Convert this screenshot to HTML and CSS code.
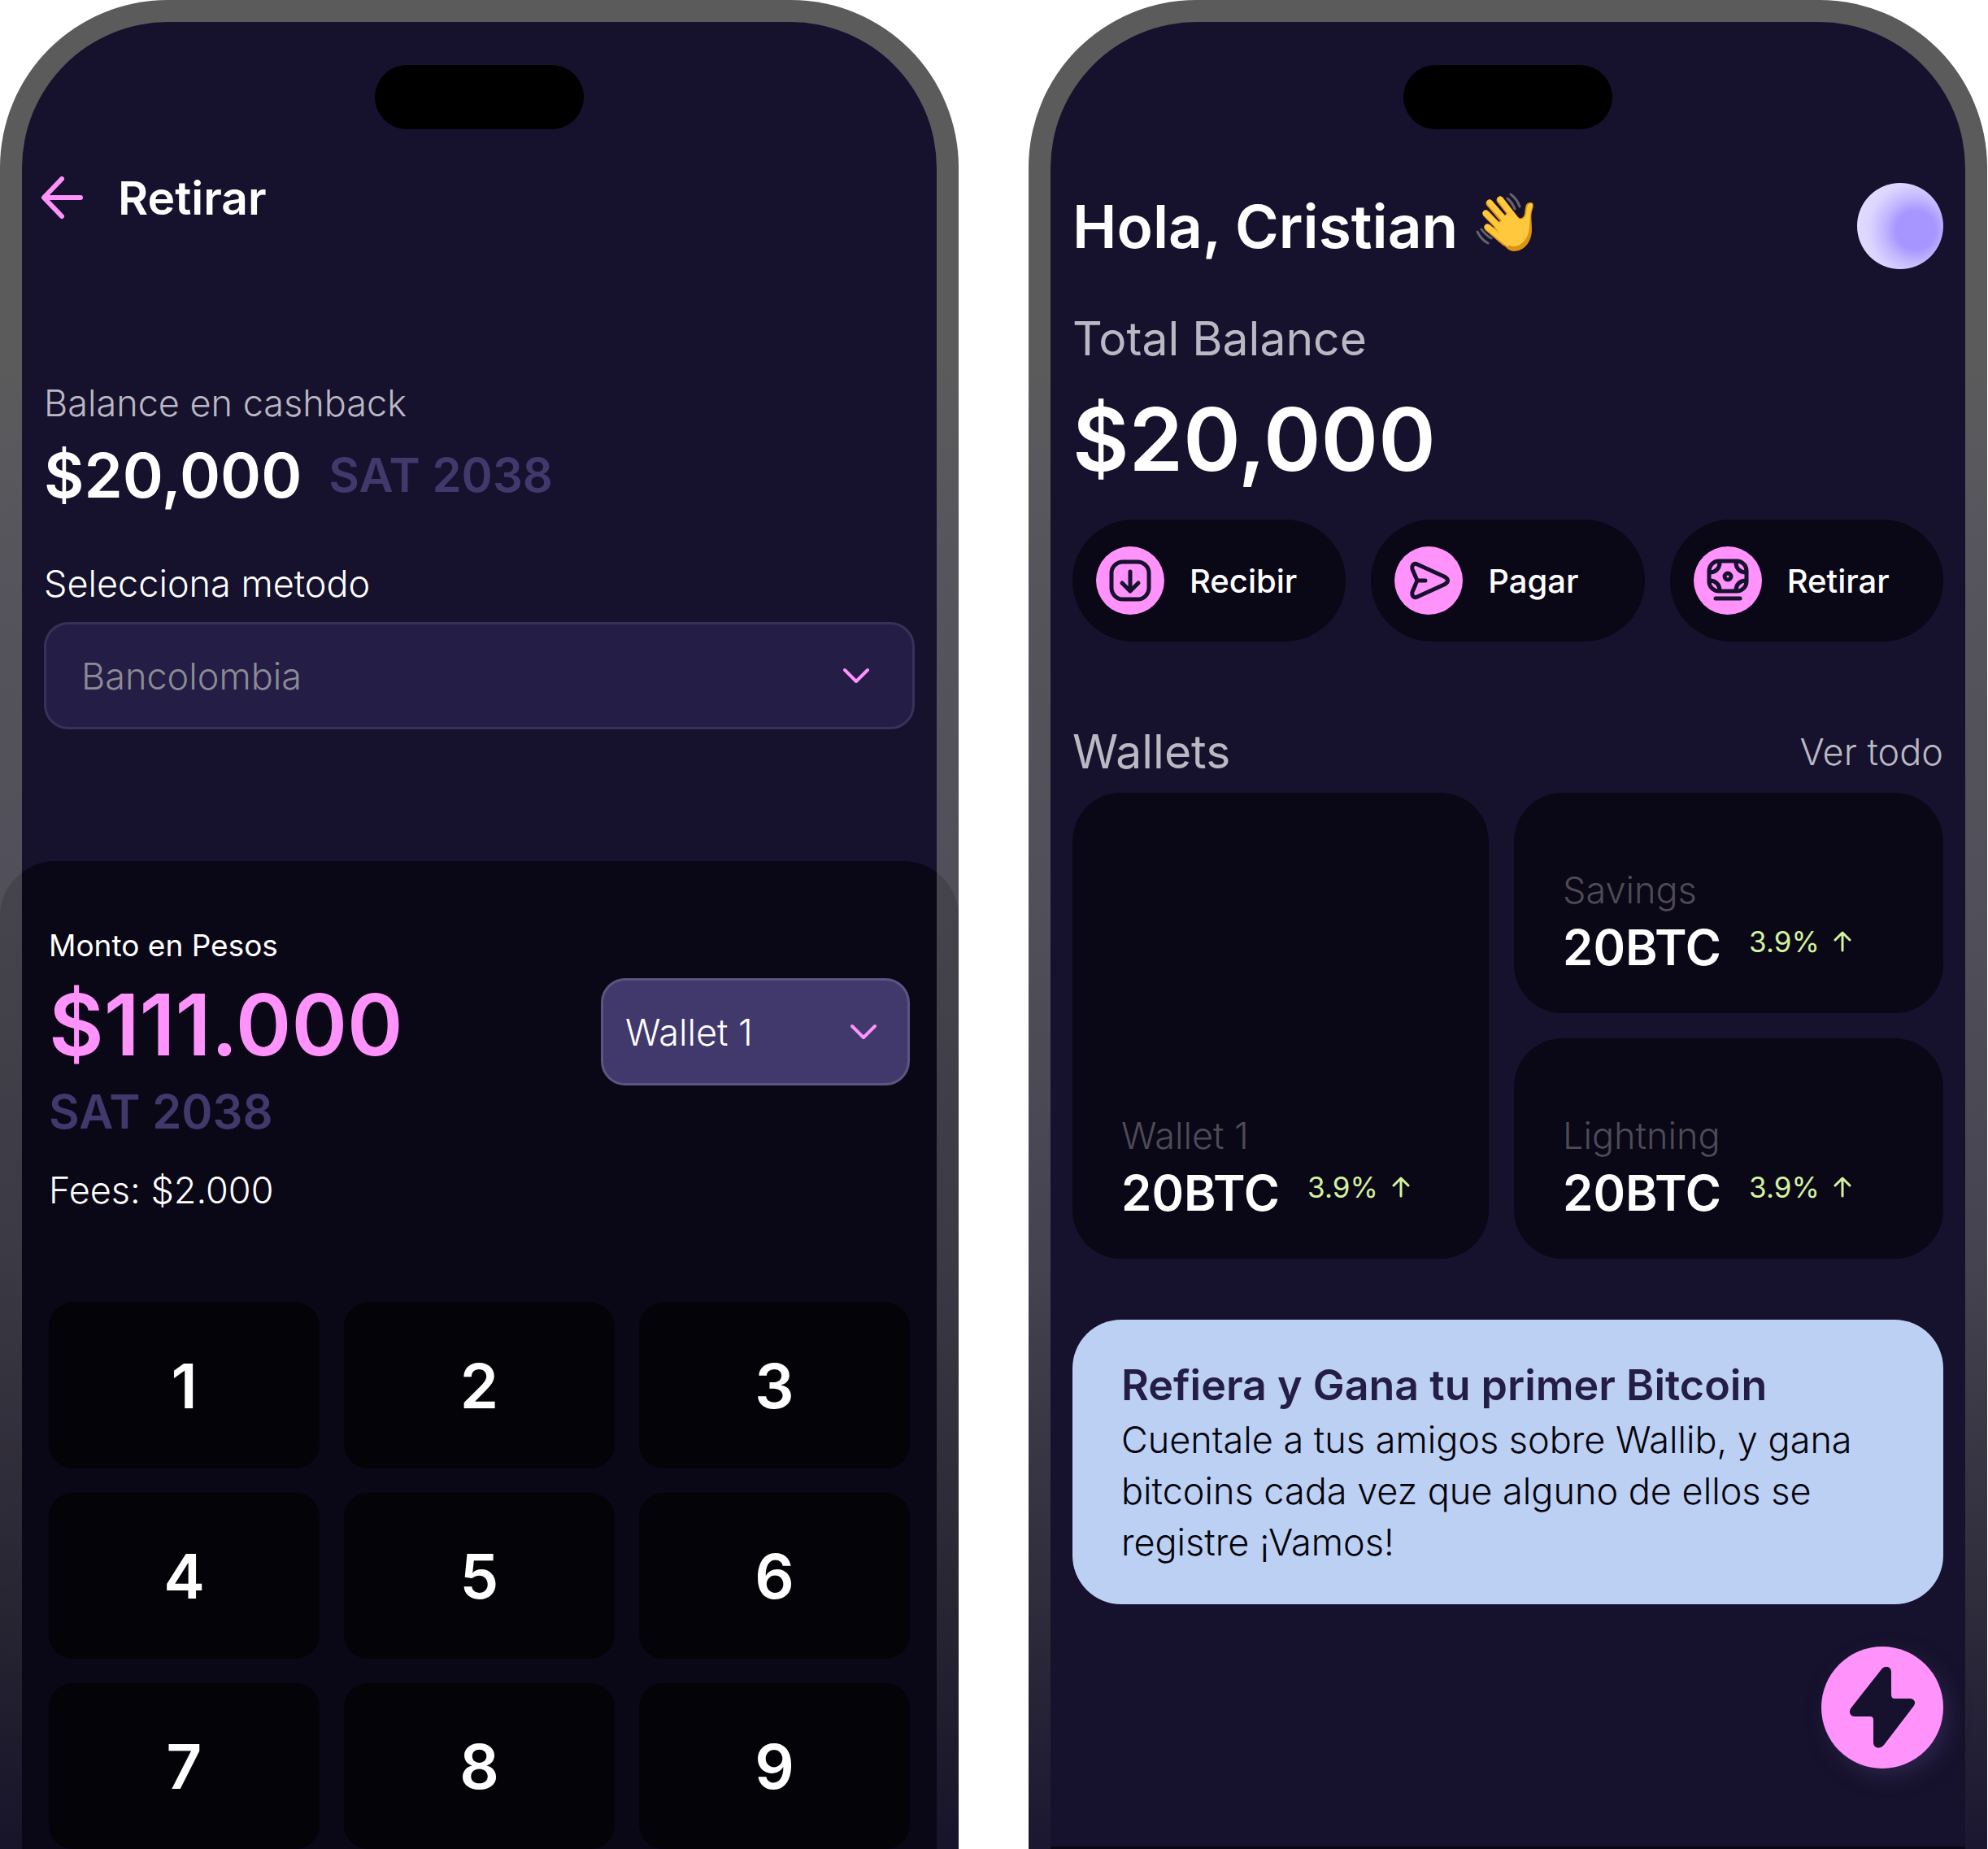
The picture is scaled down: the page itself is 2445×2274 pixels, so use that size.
FILE: index.html
```html
<!DOCTYPE html>
<html lang="es">
<head>
<meta charset="utf-8">
<title>Wallib</title>
<meta name="viewport" content="width=device-width, initial-scale=1">
<link rel="stylesheet" href="styles.css">
</head>
<body>
<main class="phones">
  <section class="phone">
    <div class="screen">
      <div class="island"></div>
      <header class="topbar">
        <button class="back" type="button" aria-label="Volver">
          <svg viewBox="0 0 54 54" width="54" height="54" fill="none" stroke="currentColor" stroke-width="6" stroke-linecap="round" stroke-linejoin="round"><path d="M50 27H6M27 4L5 27l22 23"/></svg>
        </button>
        <h1 class="title">Retirar</h1>
      </header>
      <div class="cashback">
        <p class="label muted">Balance en cashback</p>
        <p class="cashback-row"><strong class="amount">$20,000</strong><span class="sats">SAT 2038</span></p>
        <label class="label method-label" for="method">Selecciona metodo</label>
        <div class="select-wrap">
          <select id="method" class="select"><option>Bancolombia</option></select>
          <svg class="chevron" viewBox="0 0 32 20" width="32" height="20"><path d="M2 3l14 14L30 3"/></svg>
        </div>
      </div>
      <div class="sheet">
        <div class="sheet-top">
          <div>
            <p class="pesos-label">Monto en Pesos</p>
            <p class="pesos">$111.000</p>
            <p class="sats sats-line">SAT 2038</p>
            <p class="label fees">Fees: $2.000</p>
          </div>
          <div class="select-wrap wallet-wrap">
            <select class="select select-wallet" aria-label="Wallet"><option>Wallet 1</option></select>
            <svg class="chevron chevron-wallet" viewBox="0 0 32 20" width="32" height="20"><path d="M2 3l14 14L30 3"/></svg>
          </div>
        </div>
        <div class="keypad">
          <button class="key" type="button">1</button>
          <button class="key" type="button">2</button>
          <button class="key" type="button">3</button>
          <button class="key" type="button">4</button>
          <button class="key" type="button">5</button>
          <button class="key" type="button">6</button>
          <button class="key" type="button">7</button>
          <button class="key" type="button">8</button>
          <button class="key" type="button">9</button>
        </div>
      </div>
    </div>
  </section>

  <section class="phone">
    <div class="screen home">
      <div class="island"></div>
      <header class="greeting">
        <h1 class="hello">Hola, Cristian
          <svg class="wave" viewBox="0 0 76 76" width="76" height="76" aria-hidden="true">
            <g fill="none" stroke="#65626f" stroke-width="3" stroke-linecap="round"><path d="M43 3q8 6 11 15M39 8q6 5 9 13M2 49q5 10 13 14M7 46q5 7 12 11"/></g>
            <g fill="none" stroke="#dc9415" stroke-linecap="round"><path stroke-width="9" d="M17 14l24 28M30 10l22 28M13 27l24 25M15 44l21 18"/></g>
            <path d="M34 60L22 44l16-18 14 5c3 3 7 1 8-4 1-8 1-14 7-14 5 0 4 4 3 8-3 8-1 15-1 25 0 16-10 27-22 27-6 0-10-5-15-10z" fill="#dc9415"/>
            <g fill="none" stroke="#ffc83d" stroke-linecap="round"><path stroke-width="7" d="M17 13l25 28M30 9l23 30M12 26l26 26M14 43l25 20"/></g>
            <path d="M36 60L24 44l16-18 13 7c5 2 8-1 9-7 1-6 1-11 5-12 3 0 3 3 2 6-3 8-2 15-3 23-1 14-9 24-20 24-4 0-7-3-10-7z" fill="#ffc83d"/>
          </svg>
        </h1>
        <div class="avatar"></div>
      </header>
      <p class="heading muted">Total Balance</p>
      <p class="total">$20,000</p>
      <nav class="actions">
        <button class="action" type="button">
          <span class="badge"><svg viewBox="0 0 60 60" width="60" height="60"><rect x="7" y="7" width="46" height="46" rx="14"/><path d="M30 19v23M20 33l10 10 10-10"/></svg></span>Recibir
        </button>
        <button class="action" type="button">
          <span class="badge"><svg viewBox="0 0 60 60" width="60" height="60"><path d="M16 10c-4-2-7 1-6 6l6 14-6 14c-1 5 2 8 6 6l33-15c6-3 6-7 0-10zM17 30h9"/></svg></span>Pagar
        </button>
        <button class="action" type="button">
          <span class="badge"><svg viewBox="0 0 60 60" width="60" height="60"><rect x="7" y="6" width="46" height="37" rx="12"/><circle cx="30" cy="25" r="4"/><path d="M8 20c7 0 12-5 12-12M52 20c-7 0-12-5-12-12M8 30c7 0 12 5 12 12M52 30c-7 0-12 5-12 12M15 52h30"/></svg></span>Retirar
        </button>
      </nav>
      <div class="wallets-head">
        <h2 class="heading muted">Wallets</h2>
        <a class="label muted see-all" href="#wallets">Ver todo</a>
      </div>
      <div class="wallets" id="wallets">
        <article class="wallet wallet-main">
          <p class="label faint">Wallet 1</p>
          <p class="wallet-row"><strong class="btc">20BTC</strong><span class="change">3.9%<svg viewBox="0 0 24 26" width="24" height="26"><path d="M12 24V3M3 11l9-9 9 9"/></svg></span></p>
        </article>
        <article class="wallet">
          <p class="label faint">Savings</p>
          <p class="wallet-row"><strong class="btc">20BTC</strong><span class="change">3.9%<svg viewBox="0 0 24 26" width="24" height="26"><path d="M12 24V3M3 11l9-9 9 9"/></svg></span></p>
        </article>
        <article class="wallet">
          <p class="label faint">Lightning</p>
          <p class="wallet-row"><strong class="btc">20BTC</strong><span class="change">3.9%<svg viewBox="0 0 24 26" width="24" height="26"><path d="M12 24V3M3 11l9-9 9 9"/></svg></span></p>
        </article>
      </div>
      <article class="promo">
        <h2 class="promo-title">Refiera y Gana tu primer Bitcoin</h2>
        <p class="promo-text">Cuentale a tus amigos sobre Wallib, y gana bitcoins cada vez que alguno de ellos se registre ¡Vamos!</p>
      </article>
      <button class="fab" type="button" aria-label="Pago rápido">
        <svg viewBox="0 0 80 100" width="80" height="100"><path d="M39 3c4-5 12-4 12 3v28q0 5 4 5h18c7 0 9 5 5 10L42 96c-5 6-13 4-13-3V65q0-4-4-4H7c-7 0-9-6-5-11z"/></svg>
      </button>
      <div class="tabbar"></div>
    </div>
  </section>
</main>
</body>
</html>
```
FILE: styles.css
```css
:root {
  --bg: #16112c;
  --panel: #0a0716;
  --pink: #ff92fb;
  --indigo: #41396c;
}

* {
  box-sizing: border-box;
}

body {
  margin: 0;
  background: #fff;
  color: #fff;
  font-family: Inter, "Liberation Sans", sans-serif;
}

h1, h2, p {
  margin: 0;
}

button, select {
  font: inherit;
  color: inherit;
  border: 0;
}

.phones {
  display: grid;
  grid-template-columns: 1fr 1fr;
  gap: 86px;
  padding-right: 1px;
  min-height: 100vh;
}

.phone {
  padding: 27px 27px 0;
  border-radius: 206px 206px 0 0;
  background: linear-gradient(#5b5b5c 0, #5b5b5c 450px, #55535c 750px, #504e58 1150px, #454350 1550px, #302d3c 1950px, #1b1731 2274px);
  display: flex;
}

.screen {
  flex: 1;
  min-width: 0;
  display: flex;
  flex-direction: column;
  background: var(--bg);
  border-radius: 180px 180px 0 0;
  padding: 53px 27px 0;
}

.island {
  flex: none;
  align-self: center;
  width: 257px;
  height: 79px;
  border-radius: 40px;
  background: #000;
}

.label {
  font-size: 45px;
  line-height: 62px;
  font-weight: 300;
}

.muted {
  color: #b9b8c3;
}

.topbar {
  display: flex;
  align-items: center;
  gap: 42px;
  margin-top: 47px;
  height: 74px;
}

.back {
  display: flex;
  padding: 0;
  margin-left: -5px;
  background: none;
  color: var(--pink);
}

.title {
  font-size: 57px;
  font-weight: 600;
}

.cashback {
  display: flex;
  flex-direction: column;
  margin-top: 185px;
}

.cashback-row {
  display: flex;
  align-items: center;
  gap: 33px;
  height: 114px;
}

.amount {
  font-size: 76px;
  font-weight: 600;
}

.sats {
  font-size: 58px;
  font-weight: 600;
  color: var(--indigo);
}

.method-label {
  margin: 46px 0 16px;
}

.select-wrap {
  display: grid;
  align-items: center;
}

.select-wrap > * {
  grid-area: 1 / 1;
}

.select {
  appearance: none;
  width: 100%;
  height: 132px;
  padding: 0 43px;
  border: 3px solid #393158;
  border-radius: 30px;
  background: #241d45;
  color: #8b8c94;
  font-size: 45px;
  font-weight: 300;
}

.select-wallet {
  padding: 0 27px;
  border-color: #5b5580;
  background: var(--indigo);
  color: #fff;
}

.chevron {
  justify-self: end;
  margin-right: 56px;
  fill: none;
  stroke: var(--pink);
  stroke-width: 4;
  stroke-linecap: round;
  stroke-linejoin: round;
  pointer-events: none;
}

.chevron-wallet {
  margin-right: 41px;
}

.sheet {
  flex: 1;
  margin: 162px -54px 0;
  padding: 72px 60px 0;
  border-radius: 68px 68px 0 0;
  background: linear-gradient(90deg, #00000026 27px, var(--panel) 27px calc(100% - 27px), #00000026 calc(100% - 27px));
}

.sheet-top {
  display: flex;
  justify-content: space-between;
}

.pesos-label {
  font-size: 37px;
  line-height: 64px;
  font-weight: 400;
}

.pesos {
  font-size: 104px;
  line-height: 130px;
  font-weight: 600;
  color: var(--pink);
}

.sats-line {
  line-height: 80px;
  margin-top: 2px;
}

.fees {
  margin-top: 26px;
}

.wallet-wrap {
  width: 380px;
  margin-top: 72px;
  align-self: flex-start;
}

.keypad {
  display: grid;
  grid-template-columns: repeat(3, 1fr);
  gap: 30px;
  margin-top: 107px;
}

.key {
  height: 204px;
  border-radius: 30px;
  background: #040308;
  font-size: 76px;
  font-weight: 600;
}

.greeting {
  display: flex;
  align-items: center;
  justify-content: space-between;
  height: 106px;
  margin-top: 66px;
}

.hello {
  display: flex;
  align-items: center;
  gap: 22px;
  font-size: 73px;
  font-weight: 600;
}

.wave {
  margin-bottom: 8px;
}

.avatar {
  width: 106px;
  height: 106px;
  border-radius: 50%;
  background: radial-gradient(circle at 72px 58px, #a796ff 24px, #c4b8ff 40px, #dcd5ff 58px, #e4deff 80px);
}

.heading {
  font-size: 57px;
  line-height: 80px;
  font-weight: 400;
}

.home > .heading {
  margin-top: 46px;
}

.total {
  font-size: 107px;
  line-height: 130px;
  font-weight: 600;
  margin-top: 18px;
}

.actions {
  display: grid;
  grid-template-columns: repeat(3, 1fr);
  gap: 31px;
  margin-top: 34px;
}

.action {
  display: flex;
  align-items: center;
  gap: 31px;
  height: 150px;
  padding: 0 29px;
  border-radius: 75px;
  background: var(--panel);
  font-size: 40px;
  font-weight: 500;
}

.badge {
  display: flex;
  align-items: center;
  justify-content: center;
  width: 84px;
  height: 84px;
  border-radius: 50%;
  background: var(--pink);
}

.badge svg {
  fill: none;
  stroke: var(--bg);
  stroke-width: 5;
  stroke-linecap: round;
  stroke-linejoin: round;
}

.wallets-head {
  display: flex;
  align-items: center;
  justify-content: space-between;
  margin-top: 96px;
}

.see-all {
  text-decoration: none;
}

.wallets {
  display: grid;
  grid-template-columns: 512fr 528fr;
  grid-template-rows: 271px 271px;
  gap: 31px;
  margin-top: 10px;
}

.wallet {
  display: flex;
  flex-direction: column;
  justify-content: flex-end;
  padding: 0 60px 42px;
  border-radius: 60px;
  background: var(--panel);
}

.wallet-main {
  grid-row: span 2;
}

.faint {
  color: #4e4b57;
}

.wallet-row {
  display: flex;
  align-items: center;
  gap: 34px;
  height: 78px;
}

.btc {
  font-size: 60px;
  font-weight: 600;
}

.change {
  display: flex;
  align-items: center;
  gap: 16px;
  padding-bottom: 14px;
  font-size: 35px;
  font-weight: 400;
  color: #d3f29d;
}

.change svg {
  fill: none;
  stroke: currentColor;
  stroke-width: 3;
  stroke-linecap: round;
  stroke-linejoin: round;
}

.promo {
  margin-top: 75px;
  padding: 46px 60px 45px;
  border-radius: 60px;
  background: #bcd0f3;
}

.promo-title {
  font-size: 52px;
  line-height: 70px;
  font-weight: 600;
  color: #241d45;
}

.promo-text {
  font-size: 45px;
  line-height: 63px;
  font-weight: 300;
  color: #05040b;
}

.fab {
  display: flex;
  align-items: center;
  justify-content: center;
  align-self: flex-end;
  width: 150px;
  height: 150px;
  margin-top: 52px;
  padding: 0;
  border-radius: 50%;
  background: var(--pink);
  box-shadow: 8px 10px 24px #2a2348;
}

.fab svg {
  fill: var(--bg);
}

.tabbar {
  height: 3px;
  margin: auto -27px 0;
  background: var(--panel);
}
```
